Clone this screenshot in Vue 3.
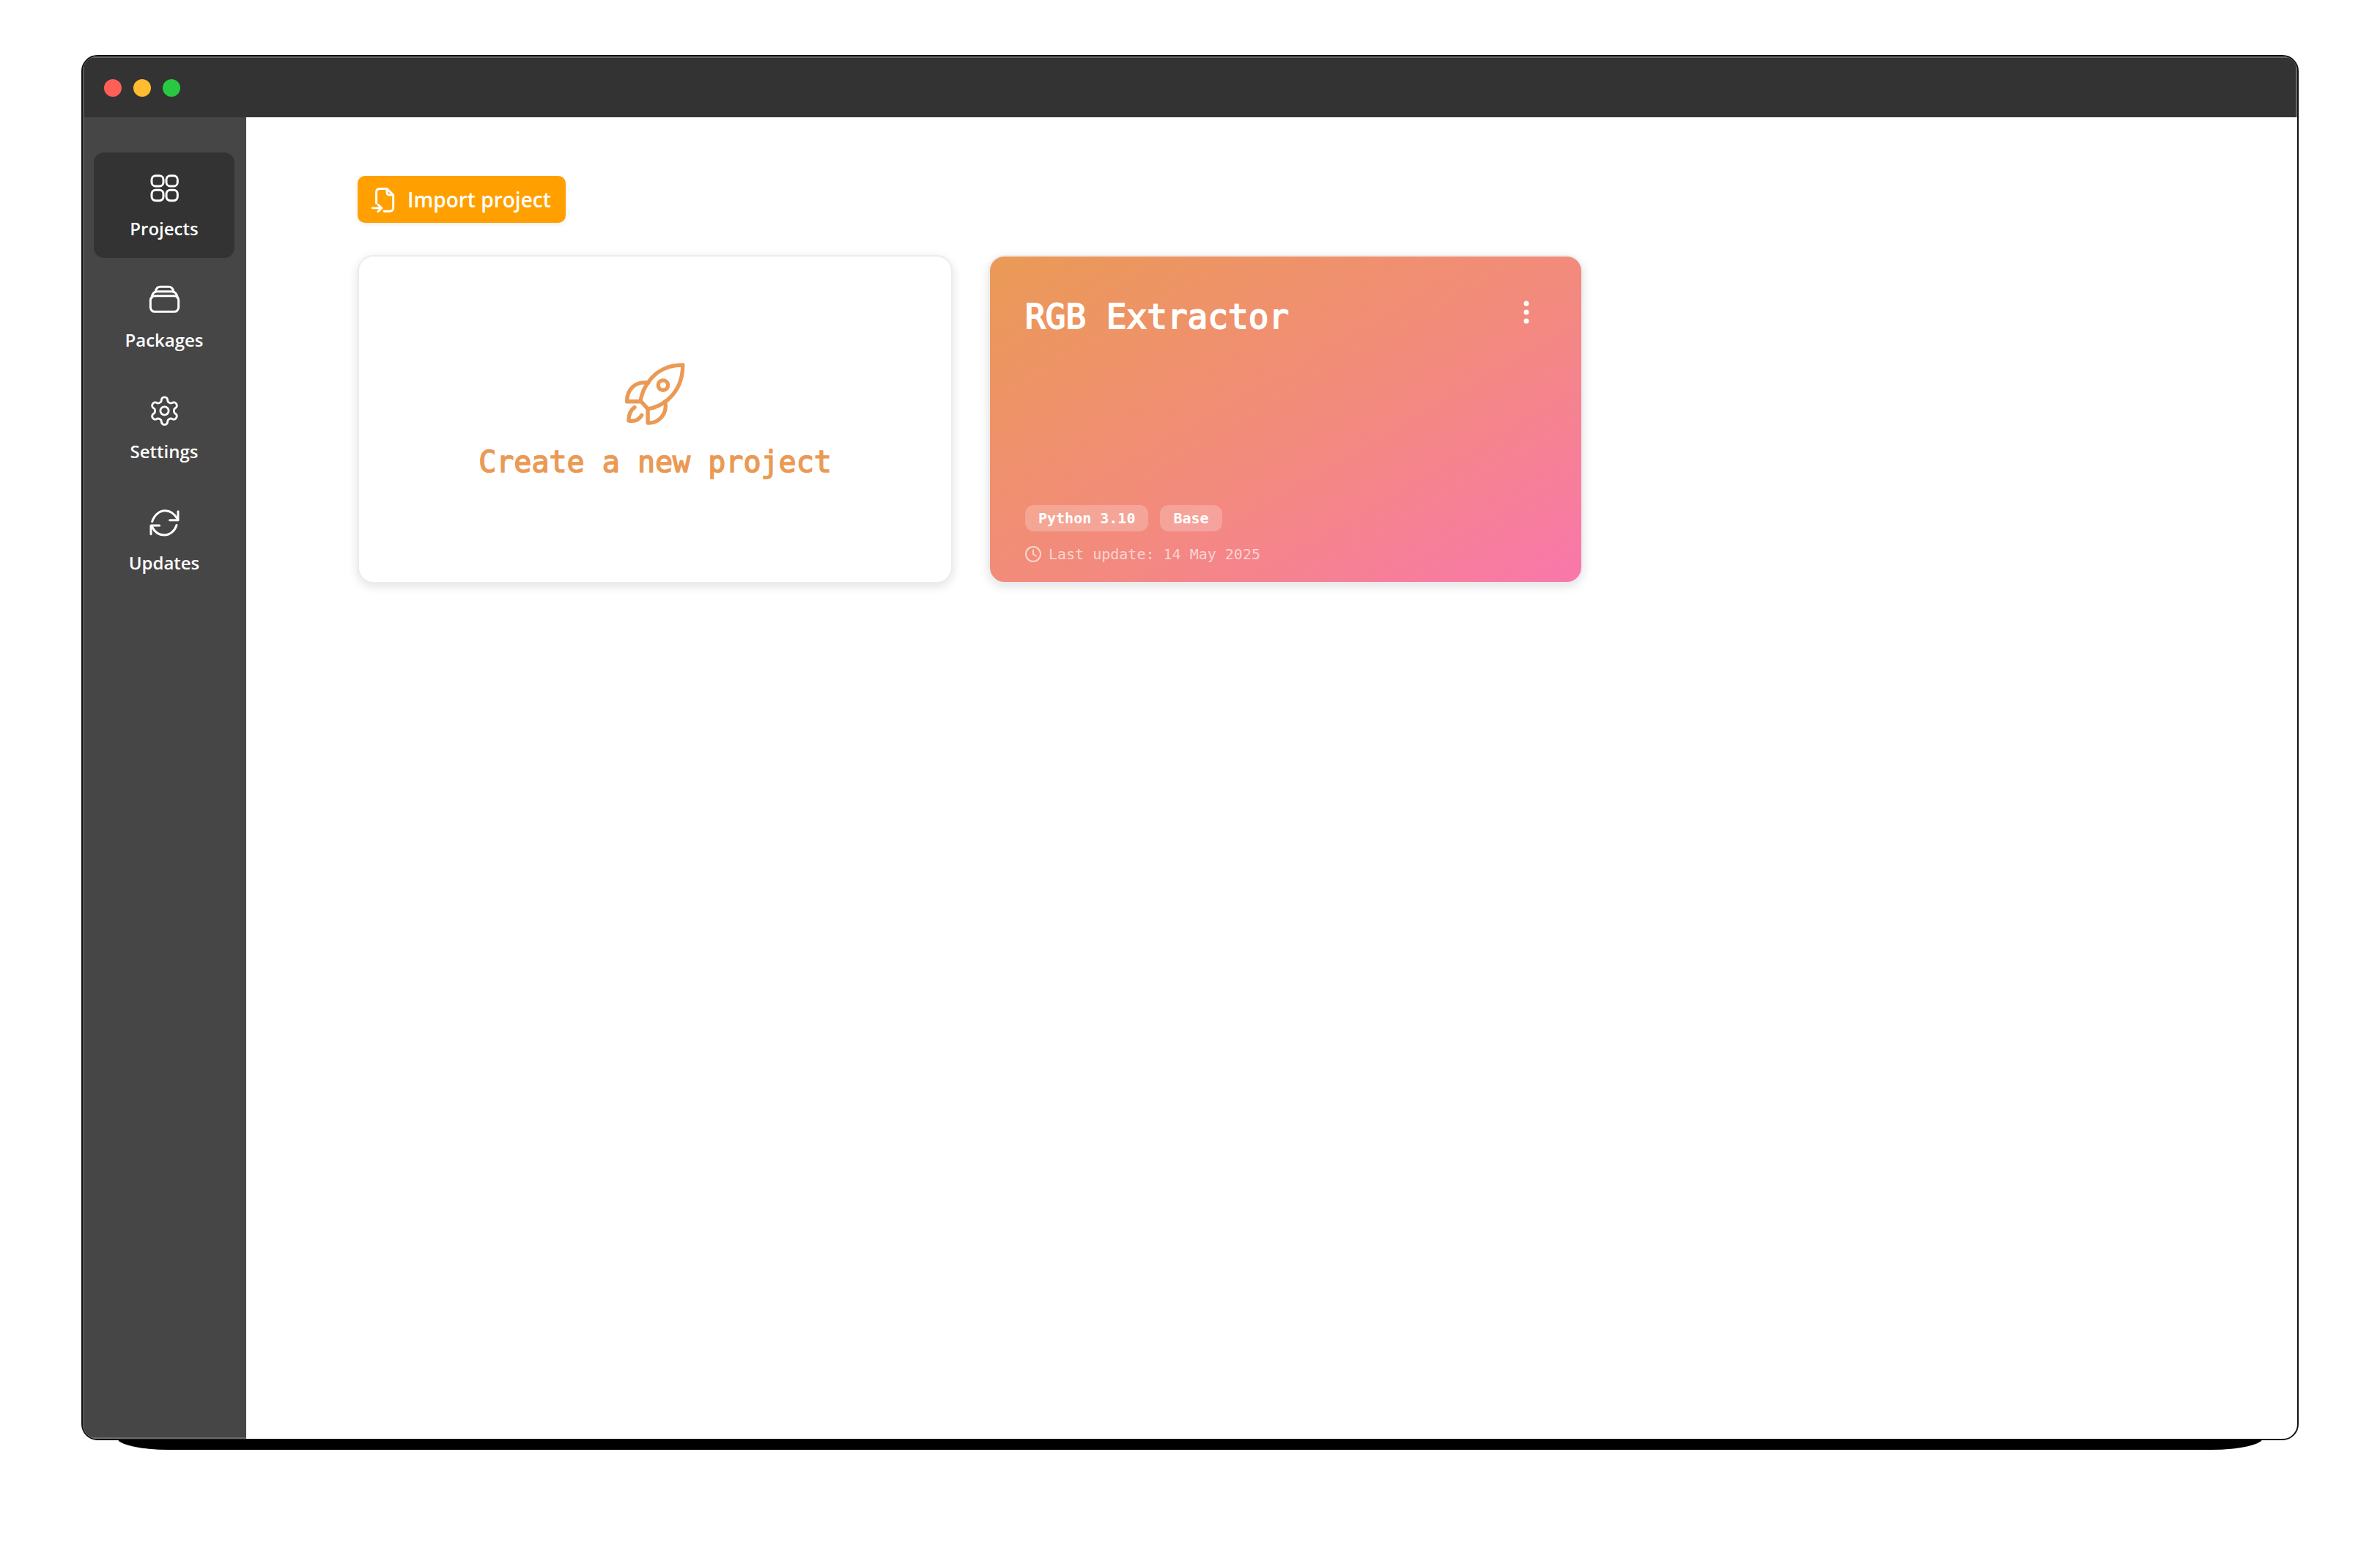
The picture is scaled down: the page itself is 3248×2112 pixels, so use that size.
<template>
  <div class="page">
    <div class="frame">
      <div class="window">
        <!-- title bar -->
        <header class="titlebar">
          <span class="light red"></span>
          <span class="light yellow"></span>
          <span class="light green"></span>
        </header>

        <div class="body">
          <!-- sidebar -->
          <nav class="sidebar">
            <a
              v-for="item in nav"
              :key="item.label"
              class="nav-item"
              :class="{ active: item.active }"
            >
              <svg class="nav-icon" :viewBox="item.box" fill="none" stroke="#fff" :stroke-width="item.sw" stroke-linecap="round" stroke-linejoin="round">
                <path v-for="d in item.paths" :key="d" :d="d" />
                <rect v-for="r in item.rects" :key="r.x + '-' + r.y" :x="r.x" :y="r.y" :width="r.w" :height="r.h" :rx="r.rx" />
                <circle v-if="item.circle" :cx="item.circle.cx" :cy="item.circle.cy" :r="item.circle.r" />
              </svg>
              <span class="nav-label">{{ item.label }}</span>
            </a>
          </nav>

          <!-- main content -->
          <main class="main">
            <button class="import-btn" type="button">
              <svg class="import-icon" viewBox="105 103 100 105" fill="none" stroke="#fff" stroke-width="9" stroke-linecap="round" stroke-linejoin="round">
                <path d="M128 170V125Q128 110 143 110H172L198 136V188Q198 203 183 203H160" />
                <path d="M172 112V125Q172 136 185 136H196" />
                <path d="M112 190H148M135 176L150 190L135 204" />
              </svg>
              Import project
            </button>

            <div class="cards">
              <div class="card new-card">
                <svg class="rocket" viewBox="670 95 255 262" fill="none" stroke="#ea9a55" stroke-width="16" stroke-linecap="round" stroke-linejoin="round">
                  <path d="M910 110C850 110 800 135 770 180C750 205 742 235 738 255L768 288C790 285 820 275 850 250C895 210 910 160 910 110Z" />
                  <circle cx="830" cy="192" r="20" />
                  <path d="M770 182C720 175 683 205 683 258H738" />
                  <path d="M768 288V345C810 348 850 310 838 258" />
                  <path d="M714 282C695 295 690 315 690 336C710 340 730 335 743 314" />
                </svg>
                <span class="new-text">Create a new project</span>
              </div>

              <div class="card project-card">
                <div class="project-top">
                  <span class="project-title">RGB Extractor</span>
                  <svg class="kebab" viewBox="0 0 12 36" fill="#fff">
                    <circle cx="6" cy="6" r="3.5" />
                    <circle cx="6" cy="18" r="3.5" />
                    <circle cx="6" cy="30" r="3.5" />
                  </svg>
                </div>
                <div class="project-bottom">
                  <div class="tags">
                    <span class="tag">Python 3.10</span>
                    <span class="tag">Base</span>
                  </div>
                  <div class="updated">
                    <svg class="clock" viewBox="0 0 22 22" fill="none" stroke="currentColor" stroke-width="2" stroke-linecap="round" stroke-linejoin="round">
                      <circle cx="11" cy="11" r="10" />
                      <path d="M11 5.5V11L15 13.5" />
                    </svg>
                    Last update: 14 May 2025
                  </div>
                </div>
              </div>
            </div>
          </main>
        </div>
      </div>
    </div>
  </div>
</template>

<script setup>
const nav = [
  {
    label: "Projects",
    active: true,
    box: "335 553 135 135",
    sw: 9,
    paths: [],
    rects: [
      { x: 350, y: 567, w: 48, h: 43, rx: 16 },
      { x: 410, y: 567, w: 46, h: 43, rx: 16 },
      { x: 350, y: 626, w: 48, h: 43, rx: 16 },
      { x: 410, y: 626, w: 46, h: 43, rx: 16 },
    ],
  },
  {
    label: "Packages",
    box: "275 50 135 135",
    sw: 9,
    paths: [
      "M290 108C292 90 300 82 312 82H372C385 82 393 90 396 108",
      "M305 83C308 70 315 63 325 63H360C370 63 377 70 380 83",
    ],
    rects: [{ x: 285, y: 100, w: 115, h: 65, rx: 18 }],
  },
  {
    label: "Settings",
    box: "0 0.5 24 24",
    sw: 1.5,
    paths: [
      "M12.22 2h-.44a2 2 0 0 0-2 2v.18a2 2 0 0 1-1 1.73l-.43.25a2 2 0 0 1-2 0l-.15-.08a2 2 0 0 0-2.73.73l-.22.38a2 2 0 0 0 .73 2.73l.15.1a2 2 0 0 1 1 1.72v.51a2 2 0 0 1-1 1.74l-.15.09a2 2 0 0 0-.73 2.73l.22.38a2 2 0 0 0 2.73.73l.15-.08a2 2 0 0 1 2 0l.43.25a2 2 0 0 1 1 1.73V20a2 2 0 0 0 2 2h.44a2 2 0 0 0 2-2v-.18a2 2 0 0 1 1-1.73l.43-.25a2 2 0 0 1 2 0l.15.08a2 2 0 0 0 2.73-.73l.22-.39a2 2 0 0 0-.73-2.73l-.15-.08a2 2 0 0 1-1-1.74v-.5a2 2 0 0 1 1-1.74l.15-.09a2 2 0 0 0 .73-2.73l-.22-.38a2 2 0 0 0-2.73-.73l-.15.08a2 2 0 0 1-2 0l-.43-.25a2 2 0 0 1-1-1.73V4a2 2 0 0 0-2-2z",
    ],
    rects: [],
    circle: { cx: 12, cy: 12, r: 3 },
  },
  {
    label: "Updates",
    box: "275 960 135 135",
    sw: 9,
    paths: [
      "M292 1022C300 995 322 977 345 977C368 977 385 992 396 1012",
      "M398 980V1016H364",
      "M392 1036C385 1060 365 1077 342 1077C320 1077 302 1064 292 1044",
      "M287 1073V1038H322",
    ],
    rects: [],
  },
];
</script>

<style>
html,
body {
  margin: 0;
  background: #fff;
}
</style>

<style scoped>
.page {
  height: 2112px;
  padding: 75px 111px 0;
  box-sizing: border-box;
  overflow: hidden;
  font-family: "Open Sans", "Noto Sans", sans-serif;
}

.frame {
  position: relative;
  width: 3026px;
  height: 1890px;
}

/* the hard black shadow peeking out under the window */
.frame::before {
  content: "";
  position: absolute;
  left: 49px;
  right: 49px;
  bottom: -13px;
  height: 40px;
  background: #000;
  border-radius: 0 0 70px 70px / 0 0 16px 16px;
}

.window {
  position: relative;
  height: 100%;
  box-sizing: border-box;
  display: flex;
  flex-direction: column;
  border: 2px solid #111;
  border-radius: 22px;
  overflow: hidden;
  background: #fff;
}

.titlebar {
  height: 83px;
  flex: none;
  display: flex;
  align-items: center;
  gap: 16px;
  padding: 3px 0 0 29px;
  box-sizing: border-box;
  background: #333;
  box-shadow: inset 0 2px 0 #666, inset -2px 0 0 #666, inset 2px 0 0 #555;
}

.light {
  width: 24px;
  height: 24px;
  border-radius: 50%;
}

.red {
  background: #ff5f57;
}

.yellow {
  background: #febc2e;
}

.green {
  background: #28c840;
}

.body {
  flex: 1;
  display: flex;
  min-height: 0;
}

.sidebar {
  width: 223px;
  flex: none;
  box-sizing: border-box;
  padding: 48px 16px 0 15px;
  display: flex;
  flex-direction: column;
  gap: 8px;
  background: #464646;
  box-shadow: inset 0 -2px 0 #6b6b6b, inset 2px 0 0 #555;
}

.nav-item {
  height: 144px;
  box-sizing: border-box;
  padding-top: 27px;
  display: flex;
  flex-direction: column;
  align-items: center;
  border-radius: 14px;
  color: #fff;
}

.nav-item.active {
  background: #333;
}

.nav-icon {
  width: 45px;
  height: 45px;
}

.nav-label {
  margin-top: 15px;
  font-size: 24px;
  line-height: 34px;
  font-weight: 550;
}

.main {
  flex: 1;
  padding: 80px 0 0 152px;
}

.import-btn {
  height: 64px;
  padding: 0 20px 0 18px;
  display: flex;
  align-items: center;
  gap: 17px;
  border: none;
  border-radius: 10px;
  background: #ffa000;
  color: #fff;
  font-family: "Open Sans", "Noto Sans", sans-serif;
  font-size: 28px;
  font-weight: 600;
  box-shadow: 0 2px 6px rgba(0, 0, 0, 0.08);
}

.import-icon {
  width: 33px;
  height: 35px;
}

.cards {
  margin-top: 44px;
  display: flex;
  gap: 49px;
}

.card {
  height: 448px;
  box-sizing: border-box;
  border: 2px solid #ececf0;
  border-radius: 22px;
  box-shadow: 0 4px 14px rgba(0, 0, 0, 0.12);
}

.new-card {
  width: 812px;
  display: flex;
  flex-direction: column;
  align-items: center;
  background: #fff;
}

.rocket {
  margin-top: 143px;
  width: 86px;
  height: 88px;
}

.new-text {
  margin-top: 21px;
  font-family: "DejaVu Sans Mono", monospace;
  font-size: 40px;
  line-height: 56px;
  color: #ea9a55;
  -webkit-text-stroke: 1.5px #ea9a55;
}

.project-card {
  width: 811px;
  padding: 54px 46px 27px 48px;
  display: flex;
  flex-direction: column;
  justify-content: space-between;
  color: #fff;
  background: linear-gradient(150deg, #ea9a55 0%, #f38a7e 55%, #f977ac 100%);
  background-origin: border-box;
}

.project-top {
  display: flex;
  justify-content: space-between;
  align-items: flex-start;
}

.project-title {
  font-family: "DejaVu Sans Mono", monospace;
  font-size: 46px;
  line-height: 56px;
  -webkit-text-stroke: 1.8px #fff;
}

.kebab {
  margin: 4px 23px 0 0;
  width: 12px;
  height: 36px;
}

.tags {
  display: flex;
  gap: 16px;
}

.tag {
  height: 36px;
  padding: 0 18px;
  display: flex;
  align-items: center;
  border-radius: 12px;
  background: rgba(255, 255, 255, 0.22);
  font-family: "DejaVu Sans Mono", monospace;
  font-size: 20px;
  font-weight: 700;
}

.updated {
  margin-top: 20px;
  display: flex;
  align-items: center;
  gap: 10px;
  height: 22px;
  font-family: "DejaVu Sans Mono", monospace;
  font-size: 20px;
  color: rgba(255, 255, 255, 0.65);
}

.clock {
  width: 22px;
  height: 22px;
}
</style>
